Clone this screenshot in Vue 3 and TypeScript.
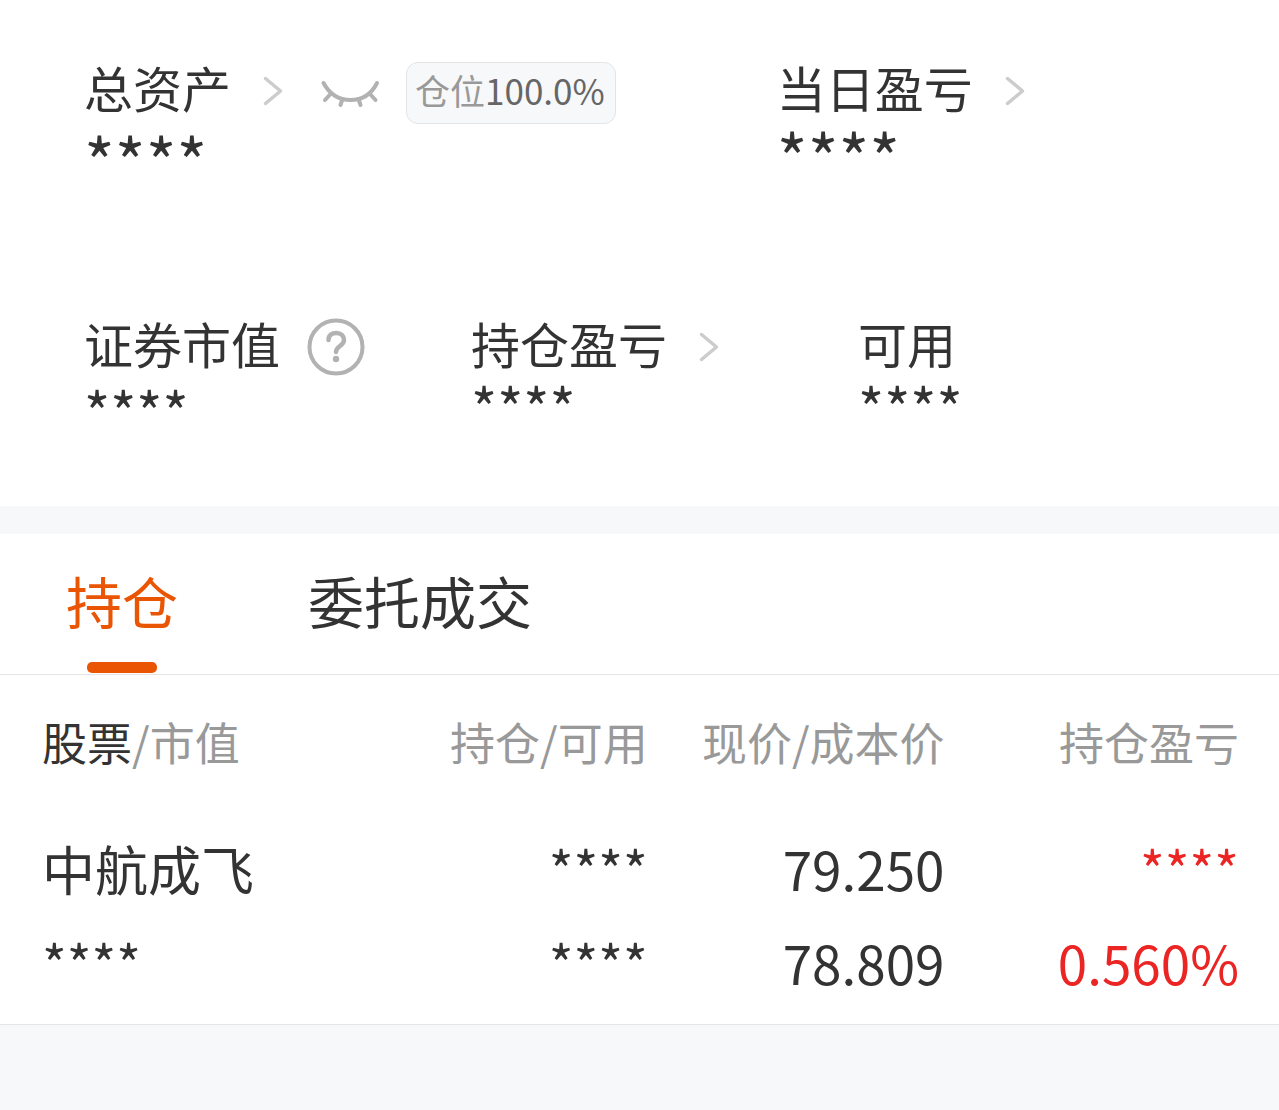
<script setup lang="ts">
import { ref } from 'vue'

interface Holding {
  name: string
  marketValue: string
  quantity: string
  available: string
  price: string
  cost: string
  profit: string
  profitRate: string
}

const MASK = '****'
const tabs: string[] = ['持仓', '委托成交']
const activeTab = ref<string>(tabs[0])

const holdings: Holding[] = [
  {
    name: '中航成飞',
    marketValue: MASK,
    quantity: MASK,
    available: MASK,
    price: '79.250',
    cost: '78.809',
    profit: MASK,
    profitRate: '0.560%',
  },
]
</script>

<template>
  <main class="page" lang="zh-CN">
    <section class="summary">
      <div class="row row-total">
        <div class="metric">
          <div class="head head-badge">
            <button class="link" type="button">
              <span class="label">总资产</span>
              <svg class="chevron" viewBox="0 0 20 30" aria-hidden="true">
                <path d="M2.5 2.5 L17.5 15 L2.5 27.5" />
              </svg>
            </button>
            <button class="eye" type="button" aria-label="显示金额">
              <svg viewBox="0 0 60 30" aria-hidden="true">
                <path d="M3.5 4 C9 14 18 21 30.5 21 C43 21 52 14 57 4" />
                <path d="M10.500 15 L5 21 M22.500 20 L20.500 26 M38.500 20 L40.500 26 M50 15 L55.500 21" />
              </svg>
            </button>
            <span class="badge"><span class="badge-name">仓位</span>100.0%</span>
          </div>
          <div class="value value-lg">{{ MASK }}</div>
        </div>
        <div class="metric">
          <div class="head head-total">
            <button class="link" type="button">
              <span class="label">当日盈亏</span>
              <svg class="chevron" viewBox="0 0 20 30" aria-hidden="true">
                <path d="M2.5 2.5 L17.5 15 L2.5 27.5" />
              </svg>
            </button>
          </div>
          <div class="value value-lg">{{ MASK }}</div>
        </div>
      </div>

      <div class="row row-detail">
        <div class="metric">
          <div class="head head-help">
            <span class="label">证券市值</span>
            <button class="help" type="button" aria-label="说明">
              <svg viewBox="0 0 58 58" aria-hidden="true">
                <circle cx="29" cy="29" r="26.500" stroke-width="4" />
                <path d="M21.500 22 C21.500 17 25 15 29.300 15 C34 15 37 18 37 22 C37 28 29 28 29 34" stroke-width="4.500" />
                <circle class="dot" cx="29" cy="41" r="3.200" />
              </svg>
            </button>
          </div>
          <div class="value">{{ MASK }}</div>
        </div>
        <div class="metric">
          <div class="head">
            <button class="link" type="button">
              <span class="label">持仓盈亏</span>
              <svg class="chevron" viewBox="0 0 20 30" aria-hidden="true">
                <path d="M2.5 2.5 L17.5 15 L2.5 27.5" />
              </svg>
            </button>
          </div>
          <div class="value">{{ MASK }}</div>
        </div>
        <div class="metric">
          <div class="head"><span class="label">可用</span></div>
          <div class="value">{{ MASK }}</div>
        </div>
      </div>
    </section>

    <nav class="tabs">
      <button
        v-for="tab in tabs"
        :key="tab"
        type="button"
        class="tab"
        :class="{ active: tab === activeTab }"
        @click="activeTab = tab"
      >
        {{ tab }}
      </button>
    </nav>

    <section class="holdings">
      <table>
        <colgroup>
          <col class="col-name" />
          <col class="col-qty" />
          <col class="col-price" />
          <col class="col-profit" />
        </colgroup>
        <thead>
          <tr>
            <th scope="col"><span class="strong">股票</span>/市值</th>
            <th scope="col">持仓/可用</th>
            <th scope="col">现价/成本价</th>
            <th scope="col">持仓盈亏</th>
          </tr>
        </thead>
        <tbody>
          <tr v-for="item in holdings" :key="item.name">
            <td><div>{{ item.name }}</div><div>{{ item.marketValue }}</div></td>
            <td><div>{{ item.quantity }}</div><div>{{ item.available }}</div></td>
            <td><div>{{ item.price }}</div><div>{{ item.cost }}</div></td>
            <td class="gain"><div>{{ item.profit }}</div><div>{{ item.profitRate }}</div></td>
          </tr>
        </tbody>
      </table>
    </section>
  </main>
</template>

<style>
body {
  margin: 0;
  background: #f7f8fa;
}
</style>

<style scoped>
.page {
  min-height: 100vh;
  background: #f7f8fa;
  color: #333;
  font-family: 'Noto Sans CJK SC', 'Noto Sans', sans-serif;
}

button {
  margin: 0;
  padding: 0;
  border: 0;
  background: none;
  color: inherit;
  font: inherit;
  cursor: pointer;
}

svg {
  display: block;
  fill: none;
  stroke-linecap: round;
  stroke-linejoin: round;
}

.summary {
  padding: 62px 34px 62px 84px;
  background: #fff;
}

.row {
  display: grid;
}

.row-total {
  grid-template-columns: 148fr 100fr;
  margin-bottom: 124px;
}

.row-detail {
  grid-template-columns: repeat(3, 1fr);
}

.head,
.link {
  display: flex;
  align-items: flex-start;
}

.head {
  height: 54px;
}

.head-total {
  height: 58px;
}

.head-help {
  height: 58px;
}

.head-badge {
  height: 62px;
}

.label {
  font-size: 49px;
  line-height: 50px;
  white-space: nowrap;
}

.chevron {
  width: 20px;
  height: 30px;
  margin: 14px 0 0 32px;
  stroke: #ccc;
  stroke-width: 3.5;
}

.eye {
  margin: 17px 0 0 37px;
}

.eye svg {
  width: 60px;
  height: 30px;
  stroke: #b2b2b2;
  stroke-width: 4;
}

.help {
  margin-left: 27px;
}

.help svg {
  width: 58px;
  height: 58px;
  stroke: #b2b2b2;
}

.help .dot {
  fill: #b2b2b2;
  stroke: none;
}

.badge {
  box-sizing: border-box;
  height: 62px;
  margin-left: 26px;
  padding: 0 10px 0 8px;
  border: 1px solid #e3e4e6;
  border-radius: 12px;
  background: #f7f8fa;
  color: #666;
  font-size: 35px;
  line-height: 54px;
  white-space: nowrap;
}

.badge-name {
  color: #999;
}

.value {
  font-size: 56px;
  line-height: 68px;
}

.value-lg {
  font-size: 66px;
  line-height: 70px;
}

.tabs {
  display: flex;
  gap: 130px;
  margin-top: 28px;
  padding: 0 66px;
  border-bottom: 1px solid #e5e5e5;
  background: #fff;
}

.tab {
  position: relative;
  height: 140px;
  padding-bottom: 8px;
  font-size: 56px;
  line-height: 132px;
  white-space: nowrap;
}

.tab.active {
  color: #ea5504;
}

.tab.active::after {
  content: '';
  position: absolute;
  bottom: 1px;
  left: 50%;
  width: 70px;
  height: 11px;
  margin-left: -35px;
  border-radius: 5px;
  background: #ea5504;
}

.holdings {
  padding: 0 40px 0 42px;
  border-bottom: 1px solid #e5e5e5;
  background: #fff;
}

table {
  width: 100%;
  border-collapse: collapse;
  table-layout: fixed;
}

.col-name {
  width: 26%;
}

.col-qty {
  width: 24.6%;
}

.col-price {
  width: 24.8%;
}

.col-profit {
  width: 24.6%;
}

th,
td {
  padding: 0;
  text-align: right;
  white-space: nowrap;
}

th:first-child,
td:first-child {
  text-align: left;
}

th {
  padding-top: 4px;
  color: #999;
  font-size: 45px;
  font-weight: 400;
  line-height: 126px;
}

.strong {
  color: #333;
}

td {
  padding: 16px 0 15px;
  font-size: 53px;
  line-height: 94px;
}

.gain {
  color: #eb2424;
}
</style>
